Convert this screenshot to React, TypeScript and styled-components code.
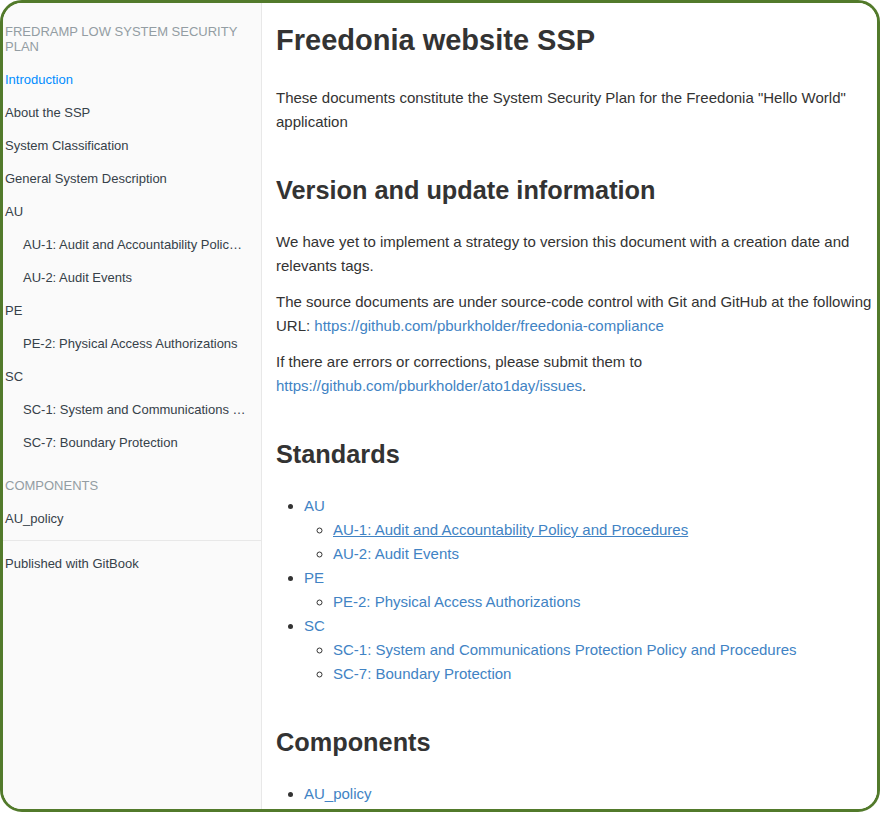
import React from "react";
import styled, { createGlobalStyle } from "styled-components";

const GlobalStyle = createGlobalStyle`
  html, body { margin: 0; padding: 0; background: #ffffff; }
  * { box-sizing: border-box; }
`;

const Frame = styled.div`
  width: 880px;
  height: 812px;
  border: 3px solid #527a2b;
  border-radius: 22px;
  overflow: hidden;
  display: flex;
  font-family: "Liberation Sans", Arial, Helvetica, sans-serif;
  background: #fff;
`;

const Sidebar = styled.nav`
  width: 259px;
  flex-shrink: 0;
  background: #fafafa;
  border-right: 1px solid #e8e8e8;
  padding-top: 12px;
`;

const SummaryList = styled.ul`
  list-style: none;
  margin: 0;
  padding: 0;
`;

const PartHeader = styled.li<{ $top?: number }>`
  font-size: 13px;
  line-height: 15px;
  text-transform: uppercase;
  color: #939da3;
  padding: ${(p) => p.$top ?? 9}px 15px 9px 2px;
`;

const NavItem = styled.li<{ $level?: number; $active?: boolean }>`
  font-size: 13px;
  line-height: 15px;
  padding: 9px 15px 9px ${(p) => (p.$level ? 20 : 2)}px;
  color: ${(p) => (p.$active ? "#008cff" : "#364149")};
  white-space: nowrap;
  overflow: hidden;
  text-overflow: ellipsis;
`;

const Divider = styled.li`
  height: 1px;
  background: rgba(0, 0, 0, 0.07);
  margin: 5px 0 6px;
`;

const Content = styled.main`
  flex: 1;
  background: #ffffff;
  padding: 19px 0 0 14px;
  color: #333333;
  overflow: hidden;
`;

const Title = styled.h1`
  font-size: 29px;
  line-height: 36px;
  font-weight: 700;
  margin: 0 0 28px;
`;

const Heading = styled.h2`
  font-size: 25.3px;
  line-height: 36px;
  font-weight: 700;
  margin: 38px 0 22px;
`;

const Para = styled.p`
  font-size: 15px;
  line-height: 24px;
  margin: 0 0 12px;
`;

const Link = styled.a<{ $underline?: boolean }>`
  color: #4183c4;
  text-decoration: ${(p) => (p.$underline ? "underline" : "none")};
`;

const List = styled.ul`
  font-size: 15px;
  line-height: 24px;
  margin: 0 0 12px;
  padding-left: 28px;
  list-style: disc;
`;

const SubList = styled.ul`
  margin: 0;
  padding-left: 29px;
  list-style: circle;
`;

const nav: { label: string; level?: number; active?: boolean }[] = [
  { label: "Introduction", active: true },
  { label: "About the SSP" },
  { label: "System Classification" },
  { label: "General System Description" },
  { label: "AU" },
  { label: "AU-1: Audit and Accountability Policy and Procedures", level: 1 },
  { label: "AU-2: Audit Events", level: 1 },
  { label: "PE" },
  { label: "PE-2: Physical Access Authorizations", level: 1 },
  { label: "SC" },
  { label: "SC-1: System and Communications Protection Policy and Procedures", level: 1 },
  { label: "SC-7: Boundary Protection", level: 1 },
];

const standards: { family: string; items: { label: string; hover?: boolean }[] }[] = [
  {
    family: "AU",
    items: [
      { label: "AU-1: Audit and Accountability Policy and Procedures", hover: true },
      { label: "AU-2: Audit Events" },
    ],
  },
  { family: "PE", items: [{ label: "PE-2: Physical Access Authorizations" }] },
  {
    family: "SC",
    items: [
      { label: "SC-1: System and Communications Protection Policy and Procedures" },
      { label: "SC-7: Boundary Protection" },
    ],
  },
];

export default function App() {
  return (
    <>
      <GlobalStyle />
      <Frame>
        <Sidebar>
          <SummaryList>
            <PartHeader>FREDRAMP LOW SYSTEM SECURITY PLAN</PartHeader>
            {nav.map((n) => (
              <NavItem key={n.label} $level={n.level} $active={n.active}>
                {n.label}
              </NavItem>
            ))}
            <PartHeader $top={19}>Components</PartHeader>
            <NavItem>AU_policy</NavItem>
            <Divider />
            <NavItem>Published with GitBook</NavItem>
          </SummaryList>
        </Sidebar>
        <Content>
          <Title>Freedonia website SSP</Title>
          <Para>
            These documents constitute the System Security Plan for the Freedonia "Hello World"
            application
          </Para>
          <Heading>Version and update information</Heading>
          <Para>
            We have yet to implement a strategy to version this document with a creation date and
            relevants tags.
          </Para>
          <Para>
            The source documents are under source-code control with Git and GitHub at the following
            URL:{" "}
            <Link href="#">https://github.com/pburkholder/freedonia-compliance</Link>
          </Para>
          <Para>
            If there are errors or corrections, please submit them to{" "}
            <Link href="#">https://github.com/pburkholder/ato1day/issues</Link>.
          </Para>
          <Heading>Standards</Heading>
          <List>
            {standards.map((s) => (
              <li key={s.family}>
                <Link href="#">{s.family}</Link>
                <SubList>
                  {s.items.map((i) => (
                    <li key={i.label}>
                      <Link href="#" $underline={i.hover}>
                        {i.label}
                      </Link>
                    </li>
                  ))}
                </SubList>
              </li>
            ))}
          </List>
          <Heading>Components</Heading>
          <List>
            <li>
              <Link href="#">AU_policy</Link>
            </li>
          </List>
        </Content>
      </Frame>
    </>
  );
}
